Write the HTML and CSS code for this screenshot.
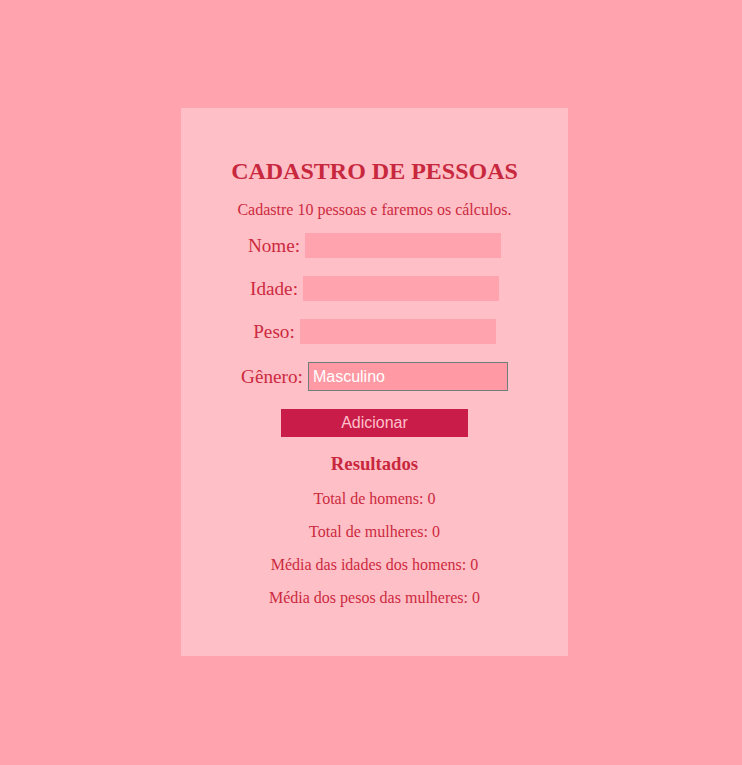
FILE: index.html
```html
<!DOCTYPE html>
<html lang="pt-BR">
<head>
<meta charset="utf-8">
<title>Cadastro de Pessoas</title>
<link rel="stylesheet" href="styles.css">
</head>
<body>
<main class="card">
  <h2 class="title">CADASTRO DE PESSOAS</h2>
  <p class="intro">Cadastre 10 pessoas e faremos os cálculos.</p>
  <form class="form">
    <div class="row"><label class="label">Nome:</label><input class="field" type="text"></div>
    <div class="row"><label class="label">Idade:</label><input class="field" type="text"></div>
    <div class="row"><label class="label">Peso:</label><input class="field" type="text"></div>
    <div class="row row-select"><label class="label">Gênero:</label><select class="select"><option>Masculino</option><option>Feminino</option></select></div>
    <button class="btn" type="button">Adicionar</button>
  </form>
  <h3 class="results-title">Resultados</h3>
  <div class="results">
    <p class="result">Total de homens: 0</p>
    <p class="result">Total de mulheres: 0</p>
    <p class="result">Média das idades dos homens: 0</p>
    <p class="result">Média dos pesos das mulheres: 0</p>
  </div>
</main>
</body>
</html>
```
FILE: styles.css
```css
html, body {
  margin: 0;
  padding: 0;
}
body {
  background: #ffa4ae;
  font-family: "Liberation Serif", "Times New Roman", serif;
  color: #cc2a40;
  display: flex;
  justify-content: center;
  padding-top: 108px;
  padding-left: 7px;
  min-height: 765px;
  box-sizing: border-box;
}
.card {
  width: 387px;
  height: 548px;
  box-sizing: border-box;
  background: #ffbfc6;
  padding-top: 49px;
  display: flex;
  flex-direction: column;
  align-items: center;
}
.title {
  margin: 0;
  font-size: 24px;
  font-weight: bold;
  color: #c8283e;
  line-height: 28px;
}
.intro {
  margin: 16px 0 0;
  font-size: 16px;
  line-height: 18px;
}
.form {
  margin-top: 14px;
  display: flex;
  flex-direction: column;
  align-items: center;
  gap: 18px;
}
.row {
  display: flex;
  align-items: center;
  gap: 5px;
  height: 25px;
}
.row-select {
  height: 29px;
}
.label {
  font-size: 19.2px;
  line-height: 22px;
}
.field {
  width: 196px;
  height: 25px;
  box-sizing: border-box;
  border: none;
  background: #ffa4ae;
  margin: 0;
  padding: 0 4px;
  outline: none;
}
.select {
  width: 200px;
  height: 29px;
  box-sizing: border-box;
  margin: 0;
  border: 1px solid #6f7e7c;
  background: #ff99a4;
  color: #ffffff;
  font-family: "Liberation Sans", Arial, sans-serif;
  font-size: 16px;
  padding: 0 4px;
  appearance: none;
  -webkit-appearance: none;
  border-radius: 0;
}
.btn {
  width: 187px;
  height: 28px;
  border: none;
  background: #c91c48;
  color: #ffc0cb;
  font-family: "Liberation Sans", Arial, sans-serif;
  font-size: 16px;
  margin: 0;
  padding: 0;
  border-radius: 0;
}
.results-title {
  margin: 16px 0 0;
  font-size: 18.72px;
  font-weight: bold;
  line-height: 22px;
  color: #c8283e;
}
.results {
  margin-top: 15px;
  display: flex;
  flex-direction: column;
  align-items: center;
  gap: 15px;
}
.result {
  margin: 0;
  font-size: 16px;
  line-height: 18px;
}
```
